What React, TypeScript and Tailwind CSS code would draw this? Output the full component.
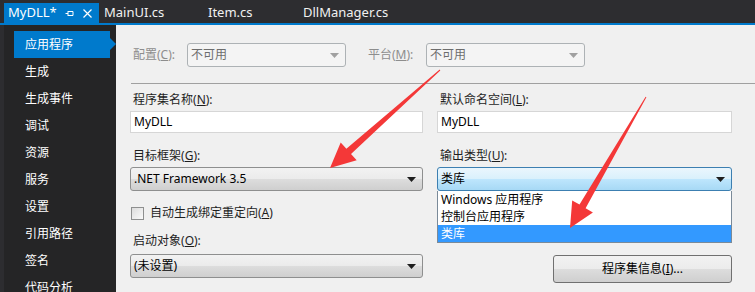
import React from 'react';

const sideItems = ['应用程序', '生成', '生成事件', '调试', '资源', '服务', '设置', '引用路径', '签名', '代码分析'];

const Label = ({ text, hot, rest }: { text: string; hot: string; rest: string }) => (
  <div className="h-[16px] leading-[16px] pl-[3px] text-[12px] text-[#1e1e1e]">
    {text}(<span className="underline">{hot}</span>){rest}
  </div>
);

const Caret = ({ color = '#1e1e1e' }: { color?: string }) => (
  <svg width="9" height="5" viewBox="0 0 9 5" className="shrink-0">
    <path d="M0 0H9L4.5 5Z" fill={color} />
  </svg>
);

const Combo = ({ value, focused = false }: { value: string; focused?: boolean }) => (
  <div
    className={`h-[24px] flex items-center justify-between pl-[3px] pr-[6px] rounded-[3px] border text-[12px] text-black ${
      focused
        ? 'border-[#3c7fb1] bg-[linear-gradient(to_bottom,#eaf6fd_0%,#d9f0fc_50%,#bee6fd_50%,#a7d9f5_100%)]'
        : 'border-[#8e8f8f] bg-[linear-gradient(to_bottom,#f2f2f2_0%,#ebebeb_50%,#dddddd_50%,#cfcfcf_100%)]'
    }`}
  >
    <span>{value}</span>
    <Caret />
  </div>
);

const DisabledCombo = () => (
  <div className="w-[159px] h-[24px] flex items-center justify-between pl-[3px] pr-[6px] rounded-[3px] border border-[#adb2b5] bg-[#f4f4f4] text-[12px] text-[#6d6d6d]">
    <span>不可用</span>
    <Caret color="#a0a0a0" />
  </div>
);

const TextBox = ({ value }: { value: string }) => (
  <div className="h-[22px] flex items-center px-[3px] bg-white border border-[#d6d6d6] text-[12px] text-black">{value}</div>
);

export default function App() {
  return (
    <div className="relative w-[755px] h-[292px] overflow-hidden bg-[#f0f0f0] font-['Noto_Sans','Noto_Sans_CJK_SC',sans-serif]">
      {/* document tabs */}
      <div className="h-[23px] bg-[#2d2d30] flex items-end pl-[4px] text-[13px] text-[#f1f1f1]">
        <div className="w-[95px] h-[20px] bg-[#007acc] flex items-center pl-[4px] text-white">
          <span className="w-[57px]">MyDLL*</span>
          <svg width="9" height="9" viewBox="0 0 9 9" className="mr-[9px]">
            <path d="M0.5 4.5H3M3 2V7M3 2.5H8V6.5H3" stroke="white" fill="none" strokeWidth="1" />
          </svg>
          <svg width="9" height="9" viewBox="0 0 9 9">
            <path d="M0.5 0.5L8.5 8.5M8.5 0.5L0.5 8.5" stroke="white" strokeWidth="1.2" />
          </svg>
        </div>
        <div className="h-[20px] flex items-center">
          <span className="w-[109px] pl-[5px]">MainUI.cs</span>
          <span className="w-[95px]">Item.cs</span>
          <span>DllManager.cs</span>
        </div>
      </div>
      <div className="h-[2px] bg-[#007acc]" />

      <div className="flex h-[267px]">
        <div className="w-[4px] bg-[#2d2d30]" />
        <nav className="w-[112px] bg-[#252526] pt-[6px] pl-[10px]">
          {sideItems.map((item, i) => (
            <div key={item} className="relative">
              <div
                className={`w-[96px] h-[27px] flex items-center pl-[11px] text-[12px] text-white ${
                  i === 0 ? 'bg-[#007acc]' : ''
                }`}
              >
                {item}
              </div>
              {i === 0 && (
                <svg width="6" height="12" viewBox="0 0 6 12" className="absolute left-[96px] top-[7px]">
                  <path d="M0 0L6 6L0 12Z" fill="#007acc" />
                </svg>
              )}
            </div>
          ))}
        </nav>

        <main className="flex-1 relative">
          <div className="flex items-center h-[24px] mt-[18px] pl-[71px] text-[12px] text-[#8d8d8d]">
            <span className="absolute left-[17px]">
              配置(<span className="underline">C</span>):
            </span>
            <DisabledCombo />
            <span className="ml-[22px] w-[58px]">
              平台(<span className="underline">M</span>):
            </span>
            <DisabledCombo />
          </div>

          <div className="ml-[15px] mt-[16px] h-px bg-[#a0a0a0]" />

          <div className="grid grid-cols-[293px_295px] gap-x-[14px] pl-[14px] mt-[8px]">
            <div>
              <Label text="程序集名称" hot="N" rest=":" />
              <div className="mt-[3px]">
                <TextBox value="MyDLL" />
              </div>
              <div className="mt-[15px]">
                <Label text="目标框架" hot="G" rest=":" />
              </div>
              <div className="mt-[3px]">
                <Combo value=".NET Framework 3.5" />
              </div>
              <div className="mt-[15px] h-[14px] flex items-center gap-[6px] pl-[1px]">
                <div className="w-[13px] h-[13px] border border-[#8e8f8f] bg-[linear-gradient(135deg,#dcdcdc,#fafafa)]" />
                <span className="text-[12px] text-[#1e1e1e]">
                  自动生成绑定重定向(<span className="underline">A</span>)
                </span>
              </div>
              <div className="mt-[13px]">
                <Label text="启动对象" hot="O" rest=":" />
              </div>
              <div className="mt-[5px]">
                <Combo value="(未设置)" />
              </div>
            </div>

            <div className="relative">
              <Label text="默认命名空间" hot="L" rest=":" />
              <div className="mt-[3px]">
                <TextBox value="MyDLL" />
              </div>
              <div className="mt-[15px]">
                <Label text="输出类型" hot="U" rest=":" />
              </div>
              <div className="mt-[3px]">
                <Combo value="类库" focused />
              </div>
              <div className="flex justify-end mt-[64px]">
                <button className="w-[179px] h-[28px] rounded-[3px] border border-[#707070] text-[12px] text-black bg-[linear-gradient(to_bottom,#f2f2f2_0%,#ebebeb_50%,#dddddd_50%,#cfcfcf_100%)]">
                  程序集信息(<span className="underline">I</span>)...
                </button>
              </div>

              {/* open dropdown list */}
              <div className="absolute left-0 top-[99px] w-[295px] bg-white border border-[#7a8a99] border-t-0 text-[12px] text-black">
                <div className="h-[17px] flex items-center pl-[3px]">Windows 应用程序</div>
                <div className="h-[17px] flex items-center pl-[3px]">控制台应用程序</div>
                <div className="h-[17px] flex items-center pl-[3px] bg-[#3399ff] text-white">类库</div>
              </div>
            </div>
          </div>
        </main>
      </div>

      {/* red annotation arrows */}
      <svg className="absolute inset-0 pointer-events-none" width="755" height="292" viewBox="0 0 755 292">
        <polygon
          points="440.3,70.4 351,154 356.7,160.3 330,168 340.7,142.4 346.4,148.7 439.7,69.6"
          fill="#f43838"
        />
        <polygon
          points="646.4,97.3 585.6,208.2 592.9,212.4 570,228 572.2,200.4 579.5,204.6 645.6,96.8"
          fill="#f43838"
        />
      </svg>
    </div>
  );
}
